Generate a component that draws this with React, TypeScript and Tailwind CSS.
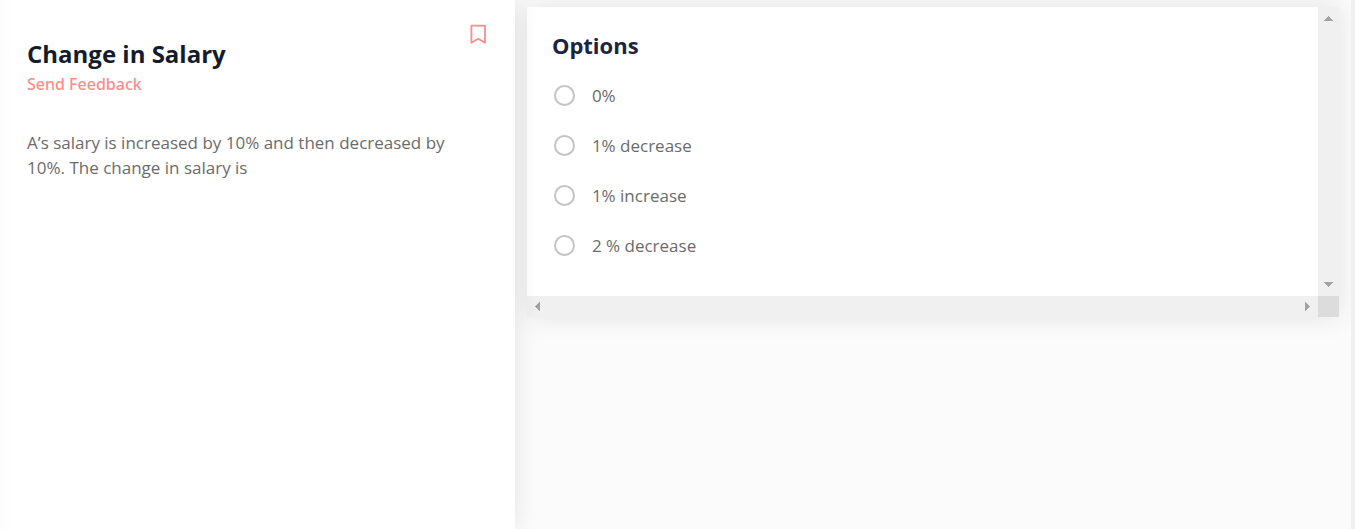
import { useState } from "react";

const options = ["0%", "1% decrease", "1% increase", "2 % decrease"];

type Direction = "up" | "down" | "left" | "right";

const arrowPaths: Record<Direction, string> = {
  up: "M0 5h9L5 0H4Z",
  down: "M0 0h9L5 5H4Z",
  left: "M5 0v9L0 5V4Z",
  right: "M0 0v9L5 5V4Z",
};

function Arrow({ direction }: { direction: Direction }) {
  const vertical = direction === "up" || direction === "down";
  return (
    <svg
      aria-hidden="true"
      width={vertical ? 9 : 5}
      height={vertical ? 5 : 9}
      fill="#a3a3a3"
      shapeRendering="crispEdges"
    >
      <path d={arrowPaths[direction]} />
    </svg>
  );
}

function Question() {
  return (
    <section className="relative z-10 w-[38%] shrink-0 bg-linear-to-r from-[#fcfcfc] to-white to-[12px] px-[27px] pt-6 shadow-[0_0_24px_rgba(0,0,0,0.1)]">
      <header className="flex items-start justify-between">
        <div className="pt-3.5">
          <h1 className="text-2xl leading-8 font-bold text-[#141c2b]">Change in Salary</h1>
          <a href="#feedback" className="block font-['Noto_Sans',sans-serif] text-base leading-7 font-medium text-[#ff8b8b]">
            Send Feedback
          </a>
        </div>
        <button type="button" aria-label="Bookmark question" className="cursor-pointer">
          <svg width="18" height="20" viewBox="0 0 18 20" fill="none" stroke="#ff8b8b" strokeWidth="1.8">
            <path d="M1.4 1.6h13.6v17.2l-6.8-4-6.8 4Z" strokeLinejoin="round" />
          </svg>
        </button>
      </header>
      <p className="mt-8 pr-6 text-[17px] leading-[25px] text-[#6b6b6b]">
        A’s salary is increased by 10% and then decreased by 10%. The change in salary is
      </p>
    </section>
  );
}

function Answers() {
  const [selected, setSelected] = useState<string | null>(null);
  return (
    <section className="grid grid-cols-[1fr_21px] grid-rows-[1fr_21px] bg-[#f0f0f0] shadow-[0_0_24px_rgba(0,0,0,0.1)]">
      <fieldset aria-labelledby="options-title" className="bg-white px-[25px] pt-[22px] pb-[38px]">
        <h2 id="options-title" className="text-[22px] leading-8 font-bold text-[#1b2540]">
          Options
        </h2>
        <div className="mt-[22px] flex flex-col gap-[25px] pl-0.5">
          {options.map((option) => (
            <label key={option} className="flex cursor-pointer items-center gap-[17px] text-[17px] leading-[25px] text-[#6b6b6b]">
              <input
                type="radio"
                name="answer"
                value={option}
                checked={selected === option}
                onChange={() => setSelected(option)}
                className="size-[21px] appearance-none rounded-full border-2 border-[#c4c4c4] bg-white checked:border-[6px] checked:border-[#ff8b8b]"
              />
              {option}
            </label>
          ))}
        </div>
      </fieldset>
      <div className="flex flex-col items-center justify-between py-[9px]">
        <Arrow direction="up" />
        <Arrow direction="down" />
      </div>
      <div className="flex items-center justify-between px-2">
        <Arrow direction="left" />
        <Arrow direction="right" />
      </div>
      <div className="bg-[#dcdcdc]" />
    </section>
  );
}

export default function App() {
  return (
    <main className="flex min-h-screen font-['Open_Sans','Noto_Sans',sans-serif]">
      <Question />
      <div className="min-w-0 flex-1 overflow-hidden border-r-4 border-[#f0f0f0] bg-[#fbfbfb] pt-[7px] pr-3 pl-3">
        <Answers />
      </div>
    </main>
  );
}
